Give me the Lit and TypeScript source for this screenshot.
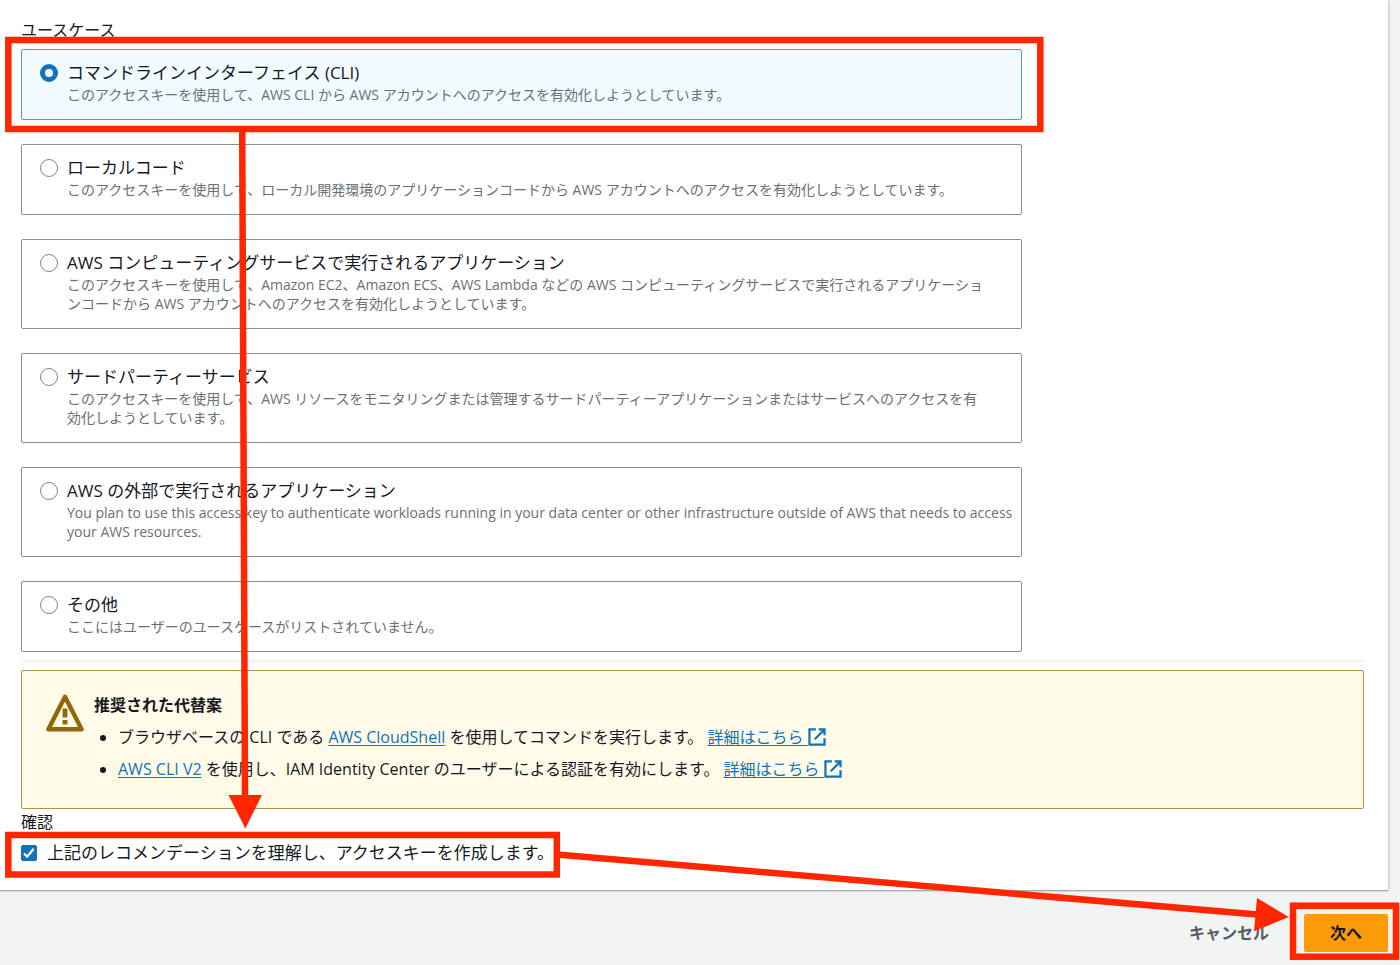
import { LitElement, html, css, svg } from "lit";
import { customElement, state } from "lit/decorators.js";

interface UseCase {
  id: string;
  title: string;
  description: string;
}

const USE_CASES: UseCase[] = [
  {
    id: "cli",
    title: "コマンドラインインターフェイス (CLI)",
    description: "このアクセスキーを使用して、AWS CLI から AWS アカウントへのアクセスを有効化しようとしています。",
  },
  {
    id: "local",
    title: "ローカルコード",
    description:
      "このアクセスキーを使用して、ローカル開発環境のアプリケーションコードから AWS アカウントへのアクセスを有効化しようとしています。",
  },
  {
    id: "compute",
    title: "AWS コンピューティングサービスで実行されるアプリケーション",
    description:
      "このアクセスキーを使用して、Amazon EC2、Amazon ECS、AWS Lambda などの AWS コンピューティングサービスで実行されるアプリケーショ\nンコードから AWS アカウントへのアクセスを有効化しようとしています。",
  },
  {
    id: "third-party",
    title: "サードパーティーサービス",
    description:
      "このアクセスキーを使用して、AWS リソースをモニタリングまたは管理するサードパーティーアプリケーションまたはサービスへのアクセスを有\n効化しようとしています。",
  },
  {
    id: "outside",
    title: "AWS の外部で実行されるアプリケーション",
    description:
      "You plan to use this access key to authenticate workloads running in your data center or other infrastructure outside of AWS that needs to access your AWS resources.",
  },
  {
    id: "other",
    title: "その他",
    description: "ここにはユーザーのユースケースがリストされていません。",
  },
];

const externalIcon = svg`<svg class="external" viewBox="0 0 16 16" aria-hidden="true">
  <path d="M7 1.3H1.3v13.4h13.4V9M9.5 1.3h5.2v5.2M14.4 1.6L6 10" />
</svg>`;

@customElement("app-root")
export class AppRoot extends LitElement {
  static styles = css`
    :host {
      display: block;
      position: relative;
      min-height: 100vh;
      overflow: hidden;
      background: #f2f3f3;
      color: #16191f;
      font-family: "Open Sans", "Noto Sans CJK JP", sans-serif;
      font-size: 16px;
      line-height: 24px;
    }
    * {
      box-sizing: border-box;
    }
    .panel {
      margin-right: 12px;
      padding: 18px 24px 25px 21px;
      background: #fff;
      box-shadow: 0 1px 1px #a3abb2, 1px 1px 2px #c5cacd;
    }
    .cases {
      display: flex;
      flex-direction: column;
      gap: 24px;
      max-width: 1001px;
      margin: 0;
      padding: 0;
      border: 0;
    }
    .legend {
      padding: 0;
      margin-bottom: 7px;
    }
    .case {
      display: grid;
      grid-template-columns: 18px 1fr;
      column-gap: 9px;
      padding: 11px 6px 15px 18px;
      border: 1px solid #879096;
      border-radius: 2px;
      cursor: pointer;
    }
    .case.selected {
      border-color: #4f9bcf;
      background: #f1faff;
    }
    .text {
      display: flex;
      flex-direction: column;
    }
    .title {
      font-size: 17px;
    }
    .description {
      color: #687078;
      font-size: 14px;
      line-height: 19px;
      white-space: pre-line;
    }
    .radio {
      appearance: none;
      width: 18px;
      height: 18px;
      margin: 3px 0 0;
      border: 1px solid #7b878c;
      border-radius: 50%;
      background: #fff;
    }
    .radio:checked {
      border: 5px solid #1173bb;
    }
    .rule {
      margin: 8px 0;
      border: 0;
      border-top: 2px solid #f3f4f4;
    }
    .alert {
      display: grid;
      grid-template-columns: 40px 1fr;
      column-gap: 8px;
      padding: 22px 24px 19px;
      border: 1px solid #b0924d;
      border-radius: 2px;
      background: #fffbe8;
    }
    .warning {
      width: 38px;
      height: 40px;
    }
    .heading {
      margin: 0;
      font-size: 16px;
      line-height: 24px;
      font-weight: 700;
    }
    .list {
      margin: 0;
      padding: 8px 0 0 24px;
    }
    .item {
      margin-bottom: 8px;
    }
    .link {
      color: #0f73bb;
      text-underline-offset: 2px;
    }
    .external {
      width: 18px;
      height: 18px;
      vertical-align: -3px;
      fill: none;
      stroke: #0f73bb;
      stroke-width: 2;
    }
    .confirm-label {
      margin-top: 1px;
    }
    .confirm {
      display: flex;
      align-items: center;
      gap: 10px;
      margin-top: 7px;
    }
    .check {
      appearance: none;
      width: 16px;
      height: 16px;
      margin: 0;
      border: 1px solid #7b878c;
      border-radius: 2px;
      background: #fff;
    }
    .check:checked {
      border-color: #1173bb;
      background: #1173bb
        url("data:image/svg+xml,%3Csvg xmlns='http://www.w3.org/2000/svg' viewBox='0 0 14 14'%3E%3Cpath d='M2 7.5l3.2 3.2 6.5-8' fill='none' stroke='white' stroke-width='2.2'/%3E%3C/svg%3E")
        center / 14px no-repeat;
    }
    .actions {
      display: flex;
      justify-content: flex-end;
      gap: 14px;
      padding: 24px 12px 13px;
    }
    .button {
      height: 38px;
      padding: 0 20px;
      border: 1px solid transparent;
      border-radius: 2px;
      background: transparent;
      color: #545b64;
      font: inherit;
      font-weight: 700;
      cursor: pointer;
    }
    .button.primary {
      padding: 0 25px;
      background: #fd9a08;
      color: #16191f;
    }
    .marks {
      position: absolute;
      top: 0;
      left: 0;
      width: 1400px;
      height: 965px;
      pointer-events: none;
    }
    .outline {
      fill: none;
      stroke: #ff2600;
      stroke-width: 6.5;
    }
    .head {
      fill: #ff2600;
    }
  `;

  @state() private selected = "cli";

  private renderCase(item: UseCase) {
    return html`<label class="case ${this.selected === item.id ? "selected" : ""}">
      <input
        class="radio"
        type="radio"
        name="use-case"
        .checked=${this.selected === item.id}
        @change=${() => (this.selected = item.id)}
      />
      <span class="text">
        <span class="title">${item.title}</span>
        <span class="description">${item.description}</span>
      </span>
    </label>`;
  }

  render() {
    return html`
      <main class="panel">
        <div class="legend" id="use-case-label">ユースケース</div>
        <div class="cases" role="radiogroup" aria-labelledby="use-case-label">
          ${USE_CASES.map((item) => this.renderCase(item))}
        </div>
        <hr class="rule" />
        <section class="alert">
          <svg class="warning" viewBox="0 0 38 40" aria-hidden="true">
            <path d="M19 3.7L35.6 36.2H2.4Z" fill="none" stroke="#906806" stroke-width="4.4" stroke-linejoin="round" />
            <path d="M19 15.5v9M19 27v4.5" stroke="#906806" stroke-width="4.8" />
          </svg>
          <div>
            <h2 class="heading">推奨された代替案</h2>
            <ul class="list">
              <li class="item">
                ブラウザベースの CLI である <a class="link" href="#cloudshell">AWS CloudShell</a>
                を使用してコマンドを実行します。
                <a class="link" href="#cloudshell-more">詳細はこちら ${externalIcon}</a>
              </li>
              <li class="item">
                <a class="link" href="#cli-v2">AWS CLI V2</a> を使用し、IAM Identity Center
                のユーザーによる認証を有効にします。
                <a class="link" href="#cli-v2-more">詳細はこちら ${externalIcon}</a>
              </li>
            </ul>
          </div>
        </section>
        <div class="confirm-label">確認</div>
        <label class="confirm">
          <input class="check" type="checkbox" checked />
          <span class="title">上記のレコメンデーションを理解し、アクセスキーを作成します。</span>
        </label>
      </main>
      <footer class="actions">
        <button class="button" type="button">キャンセル</button>
        <button class="button primary" type="button">次へ</button>
      </footer>
      <svg class="marks" viewBox="0 0 1400 965" aria-hidden="true">
        <rect class="outline" x="8.3" y="40" width="1032" height="89" />
        <path class="outline" d="M242.2 126L245 800" />
        <path class="head" d="M228.5 795H262L245.3 828.5Z" />
        <rect class="outline" x="8.3" y="835" width="548.5" height="39.5" />
        <path class="outline" d="M557 854.5L1260 914.8" />
        <path class="head" d="M1257 898L1288.7 917L1254 931.3Z" />
        <rect class="outline" x="1293" y="905.7" width="103" height="51" />
      </svg>
    `;
  }
}
